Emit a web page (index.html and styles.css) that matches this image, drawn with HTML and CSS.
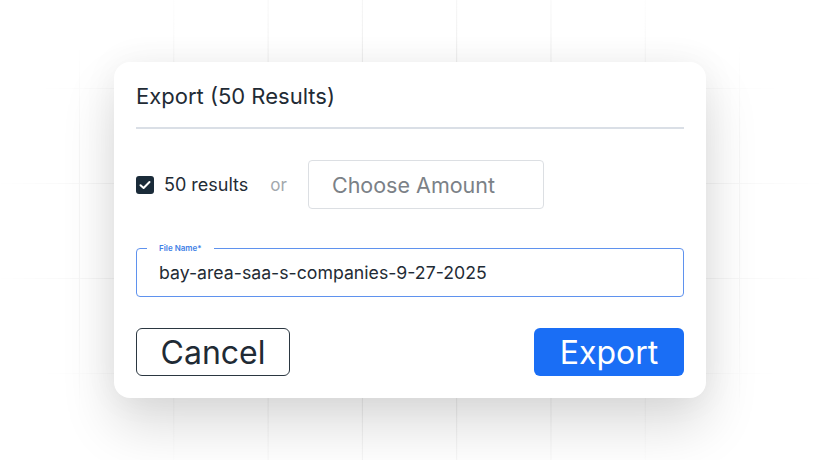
FILE: index.html
```html
<!DOCTYPE html>
<html lang="en">
<head>
<meta charset="utf-8">
<title>Export</title>
<link rel="stylesheet" href="styles.css">
</head>
<body>
<div class="stage">
  <div class="grid"></div>
  <div class="card">
    <h1 class="title">Export (50 Results)</h1>
    <div class="divider"></div>
    <div class="amount-row">
      <label class="check">
        <span class="box">
          <svg width="12" height="10" viewBox="0 0 12 10"><path d="M1.5 5.2 L4.6 8 L10.5 2" fill="none" stroke="#fff" stroke-width="2" stroke-linecap="round" stroke-linejoin="round"/></svg>
        </span>
        <span class="check-text">50 results</span>
      </label>
      <span class="or">or</span>
      <div class="amount">Choose Amount</div>
    </div>
    <div class="field">
      <span class="field-label">File Name*</span>
      <span class="field-value">bay-area-saa-s-companies-9-27-2025</span>
    </div>
    <div class="actions">
      <button class="btn btn-cancel">Cancel</button>
      <button class="btn btn-export">Export</button>
    </div>
  </div>
</div>
</body>
</html>
```
FILE: styles.css
```css
* { box-sizing: border-box; }
html, body { margin: 0; padding: 0; }
body {
  background: #ffffff;
  font-family: "Inter", "Noto Sans", sans-serif;
  color: #1d2a35;
}
.stage {
  position: relative;
  width: 820px;
  height: 460px;
  overflow: hidden;
  display: flex;
  justify-content: center;
  padding-top: 62px;
}
.grid {
  position: absolute;
  inset: 0;
  background-image:
    linear-gradient(to right, #ededed 1px, transparent 1px),
    linear-gradient(to bottom, #f0f0f0 1px, transparent 1px);
  background-size: 94.3px 95px;
  background-position: 79px 88px;
  -webkit-mask-image: radial-gradient(ellipse 420px 300px at 410px 230px, #000 60%, transparent 100%);
  mask-image: radial-gradient(ellipse 420px 300px at 410px 230px, #000 60%, transparent 100%);
}
.card {
  position: relative;
  width: 592px;
  height: 336px;
  background: #fff;
  border-radius: 16px;
  padding: 0 22px;
  box-shadow: 0 28px 54px rgba(0,0,0,0.14), 0 0 36px rgba(0,0,0,0.05);
}
.title {
  margin: 0;
  padding-top: 21px;
  font-size: 22px;
  line-height: 26px;
  font-weight: 400;
  color: #1f2b35;
}
.divider {
  margin-top: 18px;
  height: 2px;
  background: #dadfe6;
}
.amount-row {
  margin-top: 31px;
  display: flex;
  align-items: center;
  height: 49px;
}
.check {
  display: flex;
  align-items: center;
}
.box {
  width: 18px;
  height: 18px;
  border-radius: 3px;
  background: #1a2b39;
  display: flex;
  align-items: center;
  justify-content: center;
}
.check-text {
  margin-left: 10px;
  font-size: 18px;
  color: #1f2b35;
}
.or {
  margin-left: 22px;
  font-size: 17px;
  color: #a3a8ad;
}
.amount {
  margin-left: 21px;
  width: 236px;
  height: 49px;
  border: 1px solid #dcdfe3;
  border-radius: 4px;
  padding-left: 23px;
  display: flex;
  align-items: center;
  font-size: 21.5px;
  color: #7b8187;
}
.field {
  position: relative;
  margin-top: 39px;
  height: 49px;
  border: 1px solid #5f92ee;
  border-radius: 4px;
  padding-left: 22px;
  display: flex;
  align-items: center;
}
.field-label {
  position: absolute;
  left: 10px;
  top: -7px;
  padding: 0 12px;
  background: #fff;
  font-size: 8px;
  line-height: 12px;
  font-weight: 600;
  color: #3f7fe6;
}
.field-value {
  font-size: 17.7px;
  color: #1f2b35;
}
.actions {
  margin-top: 31px;
  display: flex;
  justify-content: space-between;
}
.btn {
  height: 48px;
  border-radius: 6px;
  font-family: inherit;
  font-size: 32px;
  padding: 0;
  cursor: pointer;
}
.btn-cancel {
  width: 154px;
  background: #fff;
  border: 1px solid #2b3741;
  color: #1f2b35;
}
.btn-export {
  width: 150px;
  background: #1a6ef5;
  border: 0;
  color: #fff;
}
```
